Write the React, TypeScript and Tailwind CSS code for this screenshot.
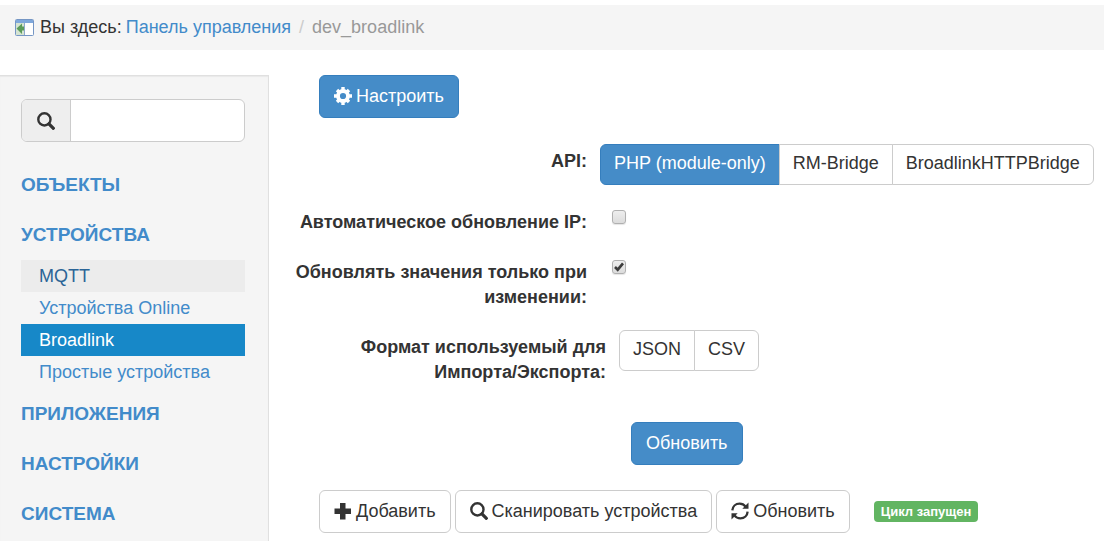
import type { ReactNode } from "react";

type IconProps = { className?: string };

function SearchIcon({ className }: IconProps) {
  return (
    <svg viewBox="0 0 18 18" fill="none" stroke="currentColor" className={className} aria-hidden="true">
      <circle cx="7.4" cy="7.4" r="6.1" strokeWidth="2.4" />
      <path d="M12 12l4.2 4.200" strokeWidth="3.2" strokeLinecap="square" />
    </svg>
  );
}

function CogIcon({ className }: IconProps) {
  return (
    <svg viewBox="-9 -9 18 18" fill="none" stroke="currentColor" className={className} aria-hidden="true">
      <circle r="5" strokeWidth="3.8" />
      <path
        d="M0-9v3M0 9V6M-9 0h3M9 0H6M-6-6l2 2M6 6l-2-2M-6 6l2-2M6-6l-2 2"
        strokeWidth="3.4"
      />
    </svg>
  );
}

function PlusIcon({ className }: IconProps) {
  return (
    <svg viewBox="0 0 18 18" fill="currentColor" className={className} aria-hidden="true">
      <path d="M6 1h5.500v5.500H17V12h-5.500v5.500H6V12H.5V6.500H6z" />
    </svg>
  );
}

function RefreshIcon({ className }: IconProps) {
  return (
    <svg viewBox="0 0 18 18" className={className} aria-hidden="true">
      <g fill="none" stroke="currentColor" strokeWidth="2.3">
        <path d="M1.400 8.400C1.600 4.400 4.600 1.600 8.600 1.600c2.500 0 4.500 1 6 3" />
        <path d="M16.600 9.600c-.2 4-3.200 6.800-7.200 6.800-2.500 0-4.500-1-6-3" />
      </g>
      <path fill="currentColor" d="M17.500.6v6.200h-6.200zM.5 17.400v-6.200h6.200z" />
    </svg>
  );
}

function PanelIcon({ className }: IconProps) {
  return (
    <svg viewBox="0 0 19 17" className={className} aria-hidden="true">
      <rect x=".5" y=".5" width="18" height="16" rx="1" fill="#fff" stroke="#7596c4" />
      <path fill="#7fa8dc" d="M1 1h17v3H1z" />
      <path fill="#d5e4d2" d="M1 4h8v12H1z" />
      <path fill="#8fa9cc" d="M9 4h1v12H9z" />
      <path fill="#5c9c5a" d="M1.500 9.500L7 4.500v3h2v4H7v3.500z" />
    </svg>
  );
}

const base =
  "inline-flex h-[43px] items-center justify-center gap-1 whitespace-nowrap rounded-md border px-3.5";

function Button({ primary, children }: { primary?: boolean; children: ReactNode }) {
  return (
    <button
      type="button"
      className={`${base} ${primary ? "border-[#357ebd] bg-[#458cc8] text-white" : "border-[#ccc] bg-white"}`}
    >
      {children}
    </button>
  );
}

function ButtonGroup({ items, active }: { items: string[]; active?: string }) {
  return (
    <div className="flex">
      {items.map((item) => (
        <button
          key={item}
          type="button"
          className={`-ml-px h-[41px] whitespace-nowrap border px-[13px] pb-0.5 first:ml-0 first:rounded-l-md last:rounded-r-md ${
            item === active ? "border-[#357ebd] bg-[#458cc8] text-white" : "border-[#ccc] bg-white"
          }`}
        >
          {item}
        </button>
      ))}
    </div>
  );
}

const labelClass = "w-[292px] shrink-0 pt-[5px] text-right font-bold";

function Checkbox({ id, checked }: { id: string; checked?: boolean }) {
  return (
    <span className="relative ml-[25px] mt-[5px] h-[14px] w-[14px]">
      <input
        id={id}
        type="checkbox"
        defaultChecked={checked}
        className="peer block h-[14px] w-[14px] appearance-none rounded-[3px] border border-[#b0b0b0] bg-linear-to-b from-[#eee] to-[#dcdcdc] shadow-[0_1px_1px_rgba(0,0,0,0.1)]"
      />
      <svg
        viewBox="0 0 14 14"
        fill="none"
        stroke="#3c3c3c"
        strokeWidth="2.6"
        className="pointer-events-none invisible absolute inset-0 peer-checked:visible"
        aria-hidden="true"
      >
        <path d="M3 7l2.700 2.700L11 3.300" />
      </svg>
    </span>
  );
}

const devices = [
  { title: "MQTT", style: "bg-[#ececec] text-[#2a6496]" },
  { title: "Устройства Online", style: "text-[#428bca]" },
  { title: "Broadlink", style: "bg-[#1788c8] text-white" },
  { title: "Простые устройства", style: "text-[#428bca]" },
];

function MenuHeading({ children }: { children: ReactNode }) {
  return (
    <a href="#" className="flex h-[50px] items-center pb-0.5 text-[19px] font-bold uppercase text-[#428bca]">
      {children}
    </a>
  );
}

function Sidebar() {
  return (
    <aside className="w-[269px] shrink-0 border-r border-t border-[#e0e0e0] bg-[#f5f5f5] pl-[21px] pr-[23px] pt-[23px] shadow-[inset_0_1px_1px_rgba(0,0,0,0.05)]">
      <div className="mb-[18px] flex h-[43px] overflow-hidden rounded-md border border-[#ccc] bg-white">
        <label htmlFor="search" className="flex w-[49px] shrink-0 items-center justify-center border-r border-[#ccc] bg-[#eee]">
          <SearchIcon className="h-[18px] w-[18px]" />
        </label>
        <input id="search" type="text" aria-label="Поиск" className="min-w-0 flex-1 px-3 outline-none" />
      </div>
      <nav>
        <MenuHeading>Объекты</MenuHeading>
        <MenuHeading>Устройства</MenuHeading>
        <ul className="pb-px">
          {devices.map((d) => (
            <li key={d.title}>
              <a href="#" className={`flex h-8 items-center pl-[18px] ${d.style}`}>
                {d.title}
              </a>
            </li>
          ))}
        </ul>
        <MenuHeading>Приложения</MenuHeading>
        <MenuHeading>Настройки</MenuHeading>
        <MenuHeading>Система</MenuHeading>
      </nav>
    </aside>
  );
}

export default function App() {
  return (
    <div className="flex min-h-screen flex-col bg-white pt-[5px] font-['Liberation_Sans',Arial,sans-serif] text-[18px] leading-[25px] text-[#333]">
      <header className="mb-[25px] flex h-[45px] items-center bg-[#f5f5f5] pl-[15px]">
        <PanelIcon className="mr-1.5 h-[17px] w-[19px]" />
        <span className="mr-1">Вы здесь:</span>
        <a href="#" className="text-[#428bca]">Панель управления</a>
        <span className="mx-2 text-[#ccc]">/</span>
        <span className="text-[#999]">dev_broadlink</span>
      </header>

      <div className="flex flex-1">
        <Sidebar />

        <main className="min-w-0 flex-1 pl-[50px]">
          <Button primary>
            <CogIcon className="mb-0.5 h-[18px] w-[18px] shrink-0" />
            Настроить
          </Button>

          <form className="-ml-6 mb-[25px] mt-[26px] flex flex-col gap-5">
            <div className="flex">
              <span className={labelClass}>API:</span>
              <div className="pl-[13px]">
                <ButtonGroup items={["PHP (module-only)", "RM-Bridge", "BroadlinkHTTPBridge"]} active="PHP (module-only)" />
              </div>
            </div>
            <div className="flex">
              <label htmlFor="auto-ip" className={labelClass}>Автоматическое обновление IP:</label>
              <Checkbox id="auto-ip" />
            </div>
            <div className="flex">
              <label htmlFor="on-change" className={labelClass}>Обновлять значения только при изменении:</label>
              <Checkbox id="on-change" checked />
            </div>
            <div className="flex pl-[19px]">
              <span className={labelClass}>Формат используемый для Импорта/Экспорта:</span>
              <div className="pl-[13px]">
                <ButtonGroup items={["JSON", "CSV"]} />
              </div>
            </div>
            <div className="ml-[336px] pt-[17px]">
              <Button primary>Обновить</Button>
            </div>
          </form>

          <div className="flex items-center gap-1">
            <Button>
              <PlusIcon className="mb-0.5 h-[18px] w-[18px] shrink-0" />
              Добавить
            </Button>
            <Button>
              <SearchIcon className="mb-0.5 h-[18px] w-[18px] shrink-0" />
              Сканировать устройства
            </Button>
            <Button>
              <RefreshIcon className="mb-0.5 h-[18px] w-[18px] shrink-0" />
              Обновить
            </Button>
            <span className="ml-5 rounded bg-[#62b562] px-[7px] text-[13px] font-bold leading-[21px] text-white">
              Цикл запущен
            </span>
          </div>
        </main>
      </div>
    </div>
  );
}
